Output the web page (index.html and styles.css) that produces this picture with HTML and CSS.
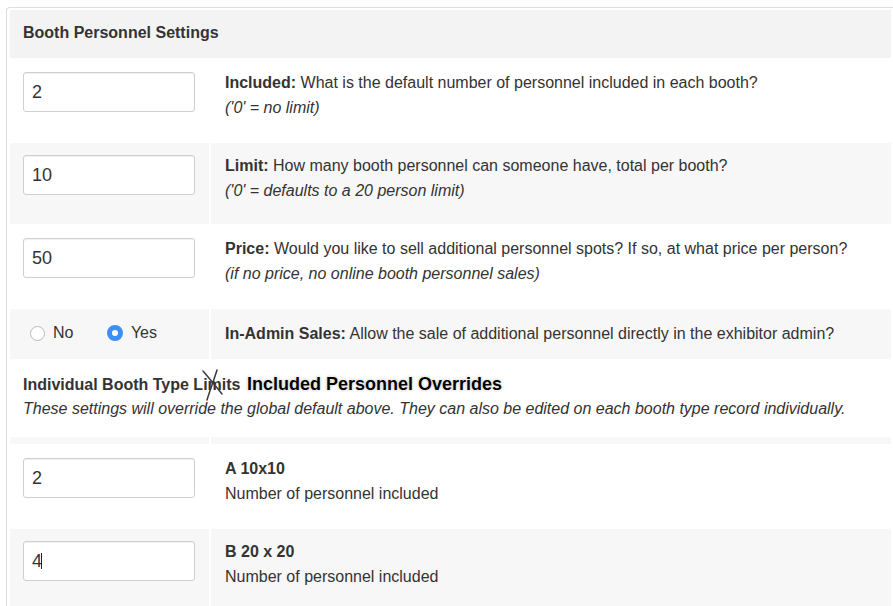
FILE: index.html
```html
<!DOCTYPE html>
<html>
<head>
<meta charset="utf-8">
<link rel="stylesheet" href="styles.css">
</head>
<body>
<div class="panel">
  <table class="settings">
    <tr class="head"><th colspan="2">Booth Personnel Settings</th></tr>
    <tr>
      <td class="ctl"><input class="field" type="text" value="2"></td>
      <td class="desc"><p><b>Included:</b> What is the default number of personnel included in each booth?</p><p class="note"><em>('0' = no limit)</em></p></td>
    </tr>
    <tr class="alt">
      <td class="ctl"><input class="field" type="text" value="10"></td>
      <td class="desc"><p><b>Limit:</b> How many booth personnel can someone have, total per booth?</p><p class="note"><em>('0' = defaults to a 20 person limit)</em></p></td>
    </tr>
    <tr>
      <td class="ctl"><input class="field" type="text" value="50"></td>
      <td class="desc"><p><b>Price:</b> Would you like to sell additional personnel spots? If so, at what price per person?</p><p class="note"><em>(if no price, no online booth personnel sales)</em></p></td>
    </tr>
    <tr class="alt radio-row">
      <td class="ctl radios">
        <label class="radio"><span class="dot"></span>No</label>
        <label class="radio"><span class="dot on"></span>Yes</label>
      </td>
      <td class="desc single"><p><b>In-Admin Sales:</b> Allow the sale of additional personnel directly in the exhibitor admin?</p></td>
    </tr>
    <tr class="section">
      <td colspan="2">
        <div class="sec-title">Individual Booth Type Li<span class="struck">mi<svg class="xmark" viewBox="0 0 24 34" width="24" height="34"><path d="M2 3 C8 10 14 17 21 26" /><path d="M16 2 C13 12 9 22 6 32" /></svg></span>ts <span class="override">Included Personnel Overrides</span></div>
        <div class="sec-note">These settings will override the global default above. They can also be edited on each booth type record individually.</div>
      </td>
    </tr>
    <tr class="alt spacer"><td class="ctl"></td><td></td></tr>
    <tr>
      <td class="ctl"><input class="field" type="text" value="2"></td>
      <td class="desc"><p><b>A 10x10</b></p><p class="note">Number of personnel included</p></td>
    </tr>
    <tr class="alt">
      <td class="ctl"><div class="field-wrap"><input class="field" type="text" value="4"><span class="caret"></span></div></td>
      <td class="desc"><p><b>B 20 x 20</b></p><p class="note">Number of personnel included</p></td>
    </tr>
  </table>
</div>
</body>
</html>
```

FILE: styles.css
```css
html, body {
  margin: 0;
  padding: 0;
  background: #fff;
  overflow: hidden;
}

body {
  font-family: "Liberation Sans", Arial, sans-serif;
  font-size: 16px;
  line-height: 20px;
  color: #333;
}

.panel {
  margin: 7px 0 0 6px;
  border-top: 1px solid #dedede;
  border-left: 1px solid #dedede;
  border-top-left-radius: 4px;
  padding-left: 1px;
}

.settings {
  width: 100%;
  border-collapse: separate;
  border-spacing: 2px;
}

.settings th,
.settings td {
  vertical-align: top;
  text-align: left;
}

.head th {
  background: #f3f3f3;
  font-weight: bold;
  padding: 13px 13px 15px;
  line-height: 20px;
  color: #333;
}

.alt td {
  background: #f7f7f7;
}

.ctl {
  width: 199px;
  box-sizing: border-box;
  padding: 12px 14px 12px 13px;
}

.field {
  display: block;
  width: 172px;
  height: 40px;
  box-sizing: border-box;
  margin: 0;
  padding: 0 8px;
  border: 1px solid #cfcfcf;
  border-radius: 3px;
  background: #fff;
  box-shadow: inset 0 1px 1px rgba(0, 0, 0, 0.06);
  font-family: "Liberation Sans", Arial, sans-serif;
  font-size: 18px;
  color: #333;
  outline: none;
}

.field-wrap {
  position: relative;
  width: 172px;
}

.caret {
  position: absolute;
  left: 18px;
  top: 12px;
  width: 1px;
  height: 16px;
  background: #222;
}

.desc {
  padding: 13px 14px 23px 14px;
}

.desc p {
  margin: 0;
  white-space: nowrap;
}

.desc .note {
  margin-top: 5px;
}

.radio-row td {
  vertical-align: middle;
  height: 50px;
  box-sizing: border-box;
  padding-top: 0;
  padding-bottom: 0;
}

.radios {
  padding-left: 20px;
}

.radios .radio {
  display: inline-flex;
  align-items: center;
  gap: 8px;
  font-size: 16px;
  color: #333;
  margin-right: 29px;
}

.dot {
  width: 15px;
  height: 15px;
  box-sizing: border-box;
  border-radius: 50%;
  border: 1px solid #b9b9b9;
  background: #fff;
  display: inline-block;
}

.dot.on {
  width: 16px;
  height: 16px;
  border: 5px solid #3b8ff6;
  background: #fff;
}

.section td {
  padding: 13px 13px 16px 13px;
  background: #fff;
}

.sec-title {
  font-weight: bold;
  white-space: nowrap;
}

.struck {
  position: relative;
}

.xmark {
  position: absolute;
  left: -7px;
  top: -8px;
  overflow: visible;
}

.xmark path {
  fill: none;
  stroke: #3a3a3a;
  stroke-width: 1.5;
  stroke-linecap: round;
}

.override {
  font-size: 18px;
  color: #000;
  margin-left: 2px;
  text-shadow: 0 0 1px #fff, 0 0 2px #fff, 0 0 3px rgba(0, 0, 0, 0.35);
}

.sec-note {
  margin-top: 4px;
  font-style: italic;
  white-space: nowrap;
}

.spacer td {
  height: 7px;
  padding: 0;
  box-sizing: border-box;
}
```
